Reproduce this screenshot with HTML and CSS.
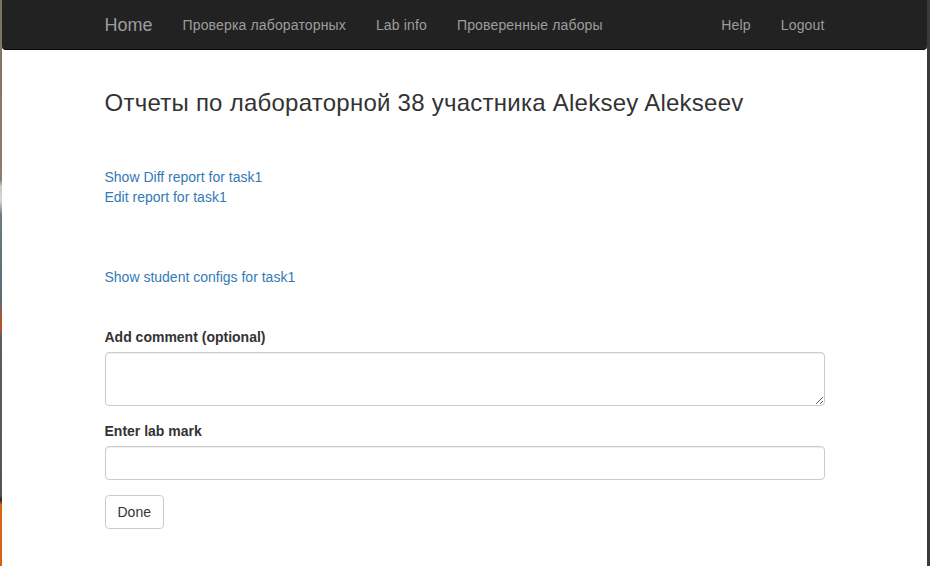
FILE: index.html
```html
<!DOCTYPE html>
<html lang="ru">
<head>
<meta charset="utf-8">
<title>Отчеты</title>
<link rel="stylesheet" href="styles.css">
</head>
<body>
<div class="edge-left"></div>
<div class="page">
  <nav class="navbar">
    <div class="container nav-inner">
      <a class="brand" href="#">Home</a>
      <ul class="nav">
        <li><a href="#">Проверка лабораторных</a></li>
        <li><a href="#">Lab info</a></li>
        <li><a href="#">Проверенные лаборы</a></li>
      </ul>
      <ul class="nav nav-right">
        <li><a href="#">Help</a></li>
        <li><a href="#">Logout</a></li>
      </ul>
    </div>
  </nav>
  <main class="container content">
    <h3 class="title">Отчеты по лабораторной 38 участника Aleksey Alekseev</h3>
    <div class="reports">
      <a href="#">Show Diff report for task1</a>
      <a href="#">Edit report for task1</a>
    </div>
    <div class="configs">
      <a href="#">Show student configs for task1</a>
    </div>
    <form class="form">
      <div class="form-group">
        <label for="comment">Add comment (optional)</label>
        <textarea id="comment" class="form-control" rows="2"></textarea>
      </div>
      <div class="form-group">
        <label for="mark">Enter lab mark</label>
        <input id="mark" class="form-control input" type="text">
      </div>
      <button type="button" class="btn">Done</button>
    </form>
  </main>
</div>
<div class="edge-right"></div>
</body>
</html>
```

FILE: styles.css
```css
* { box-sizing: border-box; }
html, body { height: 100%; }
body {
  margin: 0;
  display: flex;
  font-family: "Liberation Sans", Arial, sans-serif;
  font-size: 14px;
  line-height: 20px;
  color: #333;
  background: #fff;
  overflow: hidden;
}
.edge-left {
  width: 2px;
  flex: none;
  background: linear-gradient(to bottom,
    #7c7260 0px, #8a806c 180px, #c9c9c9 186px, #d6d6d6 200px, #6e7a82 215px,
    #5d6b74 300px, #b4532a 322px, #b4532a 330px, #5a5e62 336px,
    #555 495px, #2a2a2a 500px, #e0641a 505px, #d9600f 566px);
}
.edge-right {
  width: 3px;
  flex: none;
  background: #3b3b3b;
}
.page {
  flex: 1;
  min-width: 0;
  background: #fff;
}
.container {
  width: 750px;
  margin: 0 auto;
  padding: 0 15px;
}
.content { display: flow-root; }
.navbar {
  height: 50px;
  background: #222;
  border-bottom: 1px solid #080808;
  border-radius: 0 0 4px 4px;
  margin-bottom: 20px;
}
.nav-inner {
  display: flex;
  align-items: flex-start;
}
.brand {
  font-size: 18px;
  line-height: 20px;
  padding: 15px 15px 14px;
  margin-left: -15px;
  color: #9d9d9d;
  text-decoration: none;
}
.nav {
  display: flex;
  list-style: none;
  margin: 0;
  padding: 0;
}
.nav a {
  display: block;
  padding: 15px 15px 14px;
  line-height: 20px;
  color: #9d9d9d;
  text-decoration: none;
  letter-spacing: 0.15px;
}
.nav-right {
  margin-left: auto;
  margin-right: -15px;
}
.title {
  margin: 20px 0 10px;
  font-size: 24px;
  line-height: 1.1;
  font-weight: 500;
  letter-spacing: 0.25px;
}
.reports, .configs {
  display: flex;
  flex-direction: column;
  align-items: flex-start;
}
.reports { margin-top: 50.6px; }
.configs { margin-top: 60px; }
a { color: #337ab7; text-decoration: none; }
.form { margin-top: 40px; }
.form-group { margin-bottom: 15px; }
label {
  display: block;
  font-weight: bold;
  margin-bottom: 5px;
}
.form-control {
  display: block;
  width: 100%;
  padding: 6px 12px;
  font-family: inherit;
  font-size: 14px;
  line-height: 20px;
  color: #555;
  background: #fff;
  border: 1px solid #ccc;
  border-radius: 4px;
  box-shadow: inset 0 1px 1px rgba(0,0,0,.075);
  margin: 0;
}
textarea.form-control {
  height: 54px;
  resize: vertical;
}
.input { height: 34px; }
.btn {
  display: block;
  height: 34px;
  padding: 6px 12px;
  font-family: inherit;
  font-size: 14px;
  line-height: 20px;
  color: #333;
  background: #fff;
  border: 1px solid #ccc;
  border-radius: 4px;
  margin: 0;
}
```
